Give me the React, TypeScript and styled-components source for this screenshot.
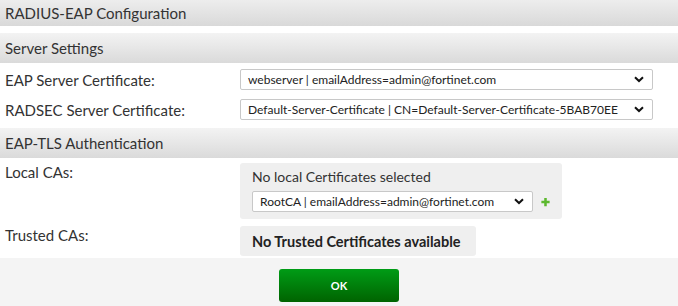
import React from "react";
import styled, { createGlobalStyle } from "styled-components";

const Global = createGlobalStyle`
  html, body { margin: 0; padding: 0; background: #fff; }
  body { font-family: Lato, "Open Sans", sans-serif; color: #333; }
`;

const Page = styled.div`
  width: 678px;
  height: 306px;
  display: flex;
  flex-direction: column;
  overflow: hidden;
`;

const TitleBar = styled.div`
  height: 26px;
  display: flex;
  align-items: center;
  padding-left: 5px;
  font-size: 15px;
  color: #333;
  background: linear-gradient(#ededed, #d9d9d9);
  box-sizing: border-box;
`;

const SectionHeader = styled.div<{ $top: number }>`
  margin-top: ${(p) => p.$top}px;
  height: 30px;
  display: flex;
  align-items: center;
  padding-left: 5px;
  font-size: 15px;
  color: #333;
  background: linear-gradient(#f3f3f3, #dadada);
`;

const Rows = styled.div<{ $pt: number; $gap: number }>`
  display: flex;
  flex-direction: column;
  padding-top: ${(p) => p.$pt}px;
  gap: ${(p) => p.$gap}px;
`;

const Row = styled.div<{ $align?: string }>`
  display: flex;
  align-items: ${(p) => p.$align || "center"};
`;

const Label = styled.div<{ $pt?: number }>`
  width: 240px;
  padding-left: 5px;
  padding-top: ${(p) => p.$pt || 0}px;
  box-sizing: border-box;
  font-size: 15px;
  color: #333;
  flex-shrink: 0;
`;

const SelectBox = styled.div<{ $w: number }>`
  width: ${(p) => p.$w}px;
  height: 21px;
  box-sizing: border-box;
  border: 1px solid #c8c8c8;
  border-radius: 2px;
  background: #fff;
  display: flex;
  align-items: center;
  justify-content: space-between;
  padding: 0 8px 0 7px;
  font-size: 12px;
  color: #222;
  white-space: nowrap;
  flex-shrink: 0;
`;

const Chevron = () => (
  <svg width="10" height="7" viewBox="0 0 10 7">
    <path d="M1 1.2 L5 5 L9 1.2" fill="none" stroke="#111" strokeWidth="2" />
  </svg>
);

const Panel = styled.div<{ $w: number }>`
  width: ${(p) => p.$w}px;
  box-sizing: border-box;
  background: #efefef;
  border-radius: 3px;
  padding: 5px 12px 7px 12px;
`;

const PanelText = styled.div`
  font-size: 14px;
  color: #333;
  margin-bottom: 6px;
`;

const SelectLine = styled.div`
  display: flex;
  align-items: center;
  gap: 8px;
`;

const Plus = () => (
  <svg width="12" height="12" viewBox="0 0 12 12">
    <path d="M6 0.5 V11.5 M0.5 6 H11.5" stroke="#5cb82e" strokeWidth="3.4" />
  </svg>
);

const EmptyPanel = styled.div`
  width: 236px;
  height: 30px;
  box-sizing: border-box;
  background: #efefef;
  border-radius: 3px;
  display: flex;
  align-items: center;
  padding-left: 12px;
  font-size: 14.5px;
  font-weight: bold;
  color: #222;
`;

const Footer = styled.div`
  margin-top: 2px;
  flex: 1;
  background: #f4f4f4;
  display: flex;
  justify-content: center;
  padding-top: 11px;
`;

const OkButton = styled.button`
  width: 120px;
  height: 33px;
  border: none;
  border-radius: 3px;
  background: linear-gradient(#009c16, #006300);
  color: #fff;
  font-family: Lato, sans-serif;
  font-weight: bold;
  font-size: 11px;
  cursor: pointer;
`;

export default function App() {
  return (
    <Page>
      <Global />
      <TitleBar>RADIUS-EAP Configuration</TitleBar>
      <SectionHeader $top={7}>Server Settings</SectionHeader>
      <Rows $pt={6} $gap={9}>
        <Row>
          <Label>EAP Server Certificate:</Label>
          <SelectBox $w={413}>
            <span>webserver | emailAddress=admin@fortinet.com</span>
            <Chevron />
          </SelectBox>
        </Row>
        <Row>
          <Label>RADSEC Server Certificate:</Label>
          <SelectBox $w={413}>
            <span>Default-Server-Certificate | CN=Default-Server-Certificate-5BAB70EE</span>
            <Chevron />
          </SelectBox>
        </Row>
      </Rows>
      <SectionHeader $top={8}>EAP-TLS Authentication</SectionHeader>
      <Rows $pt={5} $gap={7}>
        <Row $align="flex-start">
          <Label $pt={0}>Local CAs:</Label>
          <Panel $w={322}>
            <PanelText>No local Certificates selected</PanelText>
            <SelectLine>
              <SelectBox $w={281}>
                <span>RootCA | emailAddress=admin@fortinet.com</span>
                <Chevron />
              </SelectBox>
              <Plus />
            </SelectLine>
          </Panel>
        </Row>
        <Row $align="flex-start">
          <Label $pt={0}>Trusted CAs:</Label>
          <EmptyPanel>No Trusted Certificates available</EmptyPanel>
        </Row>
      </Rows>
      <Footer>
        <OkButton>OK</OkButton>
      </Footer>
    </Page>
  );
}
